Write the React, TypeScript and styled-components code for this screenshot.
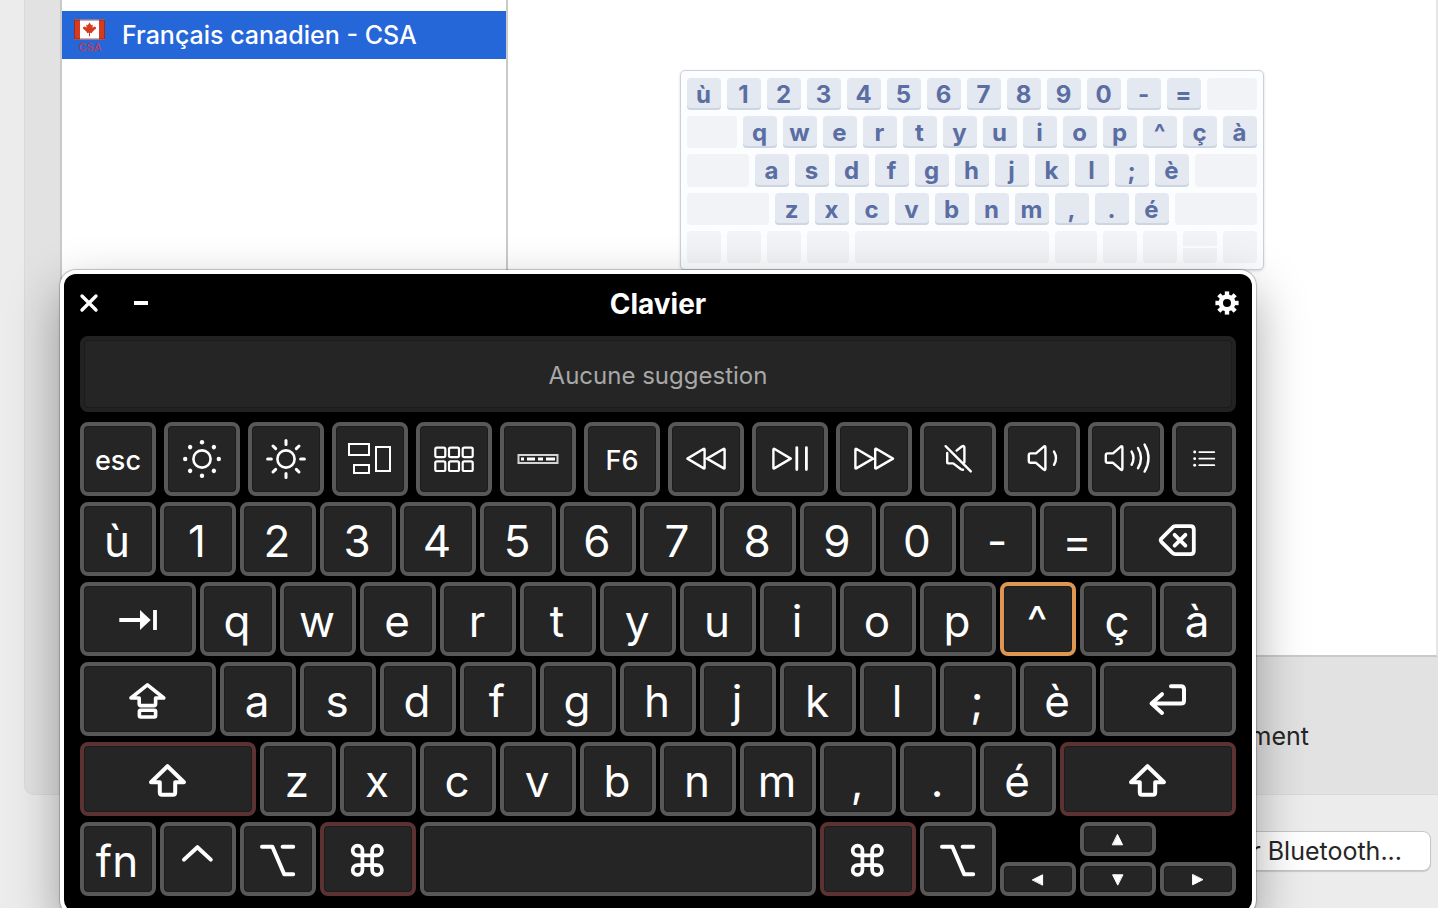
import React from "react";
import styled, { createGlobalStyle } from "styled-components";
import { Command } from "lucide-react";

const GlobalStyle = createGlobalStyle`
  * { box-sizing: border-box; }
  body {
    margin: 0;
    background: #ececec;
    font-family: Inter, "Liberation Sans", sans-serif;
  }
  button { font-family: inherit; margin: 0; padding: 0; }
`;

const Desktop = styled.main`
  position: relative;
  display: flex;
  flex-direction: column;
  height: 100vh;
  overflow: hidden;
  background: #ececec;
`;

/* ---------- Settings window behind the keyboard ---------- */

const SettingsPanel = styled.section`
  flex: 1;
  display: flex;
  flex-direction: column;
  margin-left: 24px;
  padding-left: 36px;
  background: #e2e2e2;
  border: solid #dadada;
  border-width: 0 0 1px 1px;
  border-bottom-left-radius: 10px;
`;

const Sources = styled.div`
  flex: 1;
  display: flex;
  margin-left: -1px;
  background: #fff;
  border: 2px solid #cacaca;
  border-top: 0;
  border-right-color: #e6e6e6;
`;

const SourceList = styled.ul`
  width: 446px;
  margin: 0;
  padding: 11px 0 0;
  list-style: none;
  border-right: 2px solid #cacaca;
`;

const SourceItem = styled.li`
  display: flex;
  align-items: center;
  gap: 16px;
  height: 48px;
  padding-left: 12px;
  background: #2566d9;
  color: #fff;
  font-size: 25px;
  font-weight: 500;
  line-height: 32px;
`;

const Preview = styled.div`
  flex: 1;
  display: flex;
  justify-content: center;
  align-items: flex-start;
  padding-top: 70px;
`;

const MiniBoard = styled.div`
  display: grid;
  grid-template-rows: repeat(5, 1fr);
  gap: 6px;
  width: 584px;
  height: 200px;
  padding: 7px 6px 6px;
  background: #fcfdfe;
  border: 1px solid #ccd0da;
  border-radius: 5px;
  box-shadow: 0 1px 3px rgba(0, 0, 0, 0.15);
`;

const MiniRow = styled.div<{ $columns: string }>`
  display: grid;
  grid-template-columns: ${(p) => p.$columns};
  gap: 6px;
`;

const MiniKey = styled.div<{ $blank?: boolean }>`
  display: flex;
  align-items: center;
  justify-content: center;
  min-width: 0;
  padding: ${(p) => (p.$blank ? "0" : "2px 1px 0 0")};
  border-radius: 4px;
  background: ${(p) => (p.$blank ? "#f2f3f7" : "#e4e8f0")};
  box-shadow: ${(p) => (p.$blank ? "none" : "inset 0 -2px 0 #cdd5e3")};
  color: #5a6ea4;
  font-size: 24px;
  font-weight: 700;
  line-height: 30px;
`;

const MiniSplit = styled.div`
  display: grid;
  grid-template-rows: 1fr 1fr;
  gap: 2px;
  border-radius: 4px;
  overflow: hidden;
  ${MiniKey} { border-radius: 0; }
`;

const OptionRow = styled.div`
  display: flex;
  align-items: center;
  justify-content: flex-end;
  height: 137px;
  padding: 20px 129px 0 0;
  color: #262626;
  font-size: 25px;
  line-height: 32px;
`;

const Footer = styled.footer`
  display: flex;
  justify-content: flex-end;
  align-items: flex-start;
  height: 113px;
  padding: 36px 7px 0 0;
`;

const BluetoothButton = styled.button`
  height: 40px;
  padding: 0 28px 0 20px;
  background: #fff;
  border: 1px solid #c6c6c6;
  border-radius: 8px;
  box-shadow: 0 1px 1px rgba(0, 0, 0, 0.15);
  color: #262626;
  font-size: 25px;
  line-height: 32px;
  white-space: nowrap;
`;

/* ---------- Accessibility keyboard ---------- */

const KeyboardWindow = styled.section`
  position: absolute;
  top: 270px;
  left: 60px;
  right: 182px;
  padding: 0 16px 16px;
  background: #000;
  border: 4px solid #fff;
  border-radius: 16px;
  box-shadow: 0 0 1px 1px rgba(0, 0, 0, 0.22), 0 20px 50px rgba(0, 0, 0, 0.34);
`;

const TitleBar = styled.header`
  display: grid;
  grid-template-columns: 1fr auto 1fr;
  align-items: center;
  height: 58px;
  margin: 0 -4px 4px;
  padding: 0 1px;
  color: #fff;
`;

const WindowButtons = styled.div`
  display: flex;
  gap: 32px;
  padding-left: 2px;
`;

const IconButton = styled.button`
  display: flex;
  justify-self: end;
  background: none;
  border: 0;
  color: #fff;
`;

const Title = styled.h1`
  margin: 0;
  padding-top: 2px;
  font-size: 28px;
  font-weight: 700;
  line-height: 36px;
`;

const Suggestions = styled.div`
  display: flex;
  align-items: center;
  justify-content: center;
  height: 76px;
  margin-bottom: 10px;
  padding-top: 4px;
  background: #252525;
  border: 4px solid #222;
  border-radius: 8px;
  box-shadow: inset 0 0 0 1px #1b1b1b;
  color: #a8a8a8;
  font-size: 24px;
  line-height: 32px;
`;

const Keys = styled.div`
  display: grid;
  gap: 6px;
`;

const FunctionRow = styled.div`
  display: grid;
  grid-template-columns: repeat(13, 19fr) 16fr;
  grid-auto-rows: 74px;
  gap: 8px;
`;

const KeyRow = styled.div`
  display: grid;
  grid-template-columns: repeat(58, 1fr);
  grid-auto-rows: 74px;
  column-gap: 4px;
`;

type Tone = "normal" | "dead" | "modifier";
const toneColor: Record<Tone, string> = {
  normal: "#585858",
  dead: "#df9650",
  modifier: "#5c3232",
};

const Key = styled.button<{ $span?: number; $tone?: Tone; $small?: boolean }>`
  display: flex;
  align-items: center;
  justify-content: center;
  min-width: 0;
  grid-column: span ${(p) => p.$span ?? 1};
  padding: ${(p) => (p.$small ? "2px 0 0" : "4px 2px 0 0")};
  background: #252525;
  border: 4px solid ${(p) => toneColor[p.$tone ?? "normal"]};
  border-radius: 8px;
  box-shadow: inset 0 0 0 1px #1c1c1c;
  color: #fff;
  font-size: ${(p) => (p.$small ? 27 : 44)}px;
  font-weight: ${(p) => (p.$small ? 500 : 400)};
  line-height: 1;
  > svg { margin: ${(p) => (p.$small ? "-3px 0 0" : "-4px -2px 0 0")}; }
`;

const Arrows = styled.div`
  grid-column: span 12;
  display: grid;
  grid-template-columns: repeat(3, 1fr);
  grid-template-rows: 34px 34px;
  gap: 6px 4px;
`;

const ArrowUp = styled.div`
  grid-column: 2;
  display: grid;
`;

const ArrowDownRow = styled.div`
  grid-column: 1 / -1;
  grid-row: 2;
  display: grid;
  grid-template-columns: repeat(3, 1fr);
  gap: 4px;
`;

/* ---------- Icons (drawn around a 0,0 centre) ---------- */

type GlyphProps = { size?: number; stroke?: number; children: React.ReactNode };
const Glyph = ({ size = 60, stroke = 2, children }: GlyphProps) => (
  <svg
    width={size}
    height={size}
    viewBox={`${-size / 2} ${-size / 2} ${size} ${size}`}
    fill="none"
    stroke="currentColor"
    strokeWidth={stroke}
    strokeLinecap="round"
    strokeLinejoin="round"
    aria-hidden="true"
  >
    {children}
  </svg>
);

const angles = [0, 45, 90, 135, 180, 225, 270, 315];

const DimIcon = () => (
  <Glyph stroke={2.6}>
    <circle r="8.6" />
    <g fill="currentColor" stroke="none">
      {angles.map((a) => (
        <circle key={a} cx="16.8" r="2.2" transform={`rotate(${a})`} />
      ))}
    </g>
  </Glyph>
);

const BrightIcon = () => (
  <Glyph stroke={2.6}>
    <circle r="8.6" />
    {angles.map((a) => (
      <path key={a} d="M14.6 0H18.4" strokeWidth="3" transform={`rotate(${a})`} />
    ))}
  </Glyph>
);

const MissionIcon = () => (
  <Glyph stroke={2}>
    <g strokeLinejoin="miter">
      <path d="M-21-15H-1V-4H-21ZM-16 6H-1V14H-16ZM6-12H20V12H6Z" />
    </g>
  </Glyph>
);

const LaunchpadIcon = () => (
  <Glyph stroke={2.2}>
    {[-18.7, -5, 8.7].map((x) =>
      [-11.4, 2.4].map((y) => <rect key={`${x}${y}`} x={x} y={y} width="10" height="9.6" rx="1.6" />)
    )}
  </Glyph>
);

const TouchBarIcon = () => (
  <Glyph stroke={2}>
    <rect x="-19.5" y="-4" width="39" height="8" strokeLinejoin="miter" stroke="#d4d4d4" />
    <path d="M-17 0h3M-11 0h8M0 0h5M8 0h9" strokeWidth="2.8" strokeLinecap="butt" />
  </Glyph>
);

const RewindIcon = () => (
  <Glyph stroke={2.4}>
    <path d="M-18.6-.4L-2.2-10.2Q-1.4-10.4-1.4-9.6V9Q-1.4 9.8-2.2 9.4ZM1-.4L17.8-10.2Q18.6-10.4 18.6-9.6V9Q18.6 9.8 17.8 9.4Z" />
  </Glyph>
);

const ForwardIcon = () => (
  <Glyph stroke={2.4}>
    <g transform="scale(-1 1)">
      <path d="M-19-.4L-2.2-10.2Q-1.2-10.4-1.2-9.6V9Q-1.2 9.8-2.2 9.4ZM1-.4L17.8-10.2Q18.6-10.4 18.6-9.6V9Q18.6 9.8 17.8 9.4Z" />
    </g>
  </Glyph>
);

const PlayIcon = () => (
  <Glyph stroke={2.4}>
    <path d="M.8-.4L-15.8-10.2Q-16.6-10.4-16.6-9.6V9Q-16.6 9.8-15.8 9.4Z" />
    <path d="M6.8-11.4V10.6M16.4-11.4V10.6" strokeWidth="2.8" />
  </Glyph>
);

const MuteIcon = () => (
  <Glyph stroke={2.4}>
    <path d="M-12.4-12.8L12.8 12.4M-10.8-6V3.6Q-10.8 4.4-10 4.4H-4.8L3 10.2Q4 10.8 5 10.8M-1.4-8.4L3.4-12.2Q6.4-14 6.4-11.4V3.2" />
  </Glyph>
);

const SpeakerBody = ({ shift = 0 }: { shift?: number }) => (
  <path
    transform={`translate(${shift} 0)`}
    d="M-11.4-5.6H-6L1.8-12.4Q3.4-13.4 3.4-11.6V9.8Q3.4 11.6 1.8 10.6L-6 3.8H-11.4Q-13.2 3.8-13.2 2V-3.8Q-13.2-5.6-11.4-5.6Z"
  />
);

const VolumeDownIcon = () => (
  <Glyph stroke={2.4}>
    <SpeakerBody />
    <path d="M12-7.4Q16-.9 12 5.8" />
  </Glyph>
);

const VolumeUpIcon = () => (
  <Glyph stroke={2.4}>
    <SpeakerBody shift={-7} />
    <path d="M5.6-7.4Q9.4-.9 5.6 5.8M12-11Q18-.9 12 9.2M18.6-14.4Q26.4-.9 18.6 12.6" />
  </Glyph>
);

const ListIcon = () => (
  <Glyph stroke={2}>
    {[-7.4, -0.4, 6.6].map((y) => (
      <g key={y}>
        <circle cx="-10" cy={y} r="1.6" fill="currentColor" stroke="none" />
        <path d={`M-5 ${y}H11`} />
      </g>
    ))}
  </Glyph>
);

const DeleteIcon = () => (
  <Glyph stroke={3.8}>
    <path d="M-5.6-11.4Q-4.4-12.8-2.6-12.8H12.4Q15.8-12.8 15.8-9.4V11.8Q15.8 15.2 12.4 15.2H-2.6Q-4.4 15.2-5.6 13.8L-16.6 2.8Q-18 1.2-16.6-.4Z" />
    <path d="M-3.4-4.2L7.4 6.6M7.4-4.2L-3.4 6.6" />
  </Glyph>
);

const TabIcon = () => (
  <Glyph stroke={3.8}>
    <g strokeLinecap="butt" strokeLinejoin="miter">
      <path d="M-18.7 1H3M17-9V11" />
      <path d="M2-9L12.7 1L2 11Z" fill="currentColor" stroke="none" />
    </g>
  </Glyph>
);

const CapsIcon = () => (
  <Glyph stroke={3.6}>
    <path d="M-.6-14.2L15.8-1H7.6V4.8Q7.6 6.6 5.8 6.6H-7Q-8.8 6.6-8.8 4.8V-1H-17Z" />
    <rect x="-8.6" y="11.2" width="16.2" height="6.8" rx="1.2" />
  </Glyph>
);

const ShiftIcon = () => (
  <Glyph stroke={4}>
    <path d="M-.5-12.8L16 3.2H7.2V13.6Q7.2 15.8 5 15.8H-6Q-8.2 15.8-8.2 13.6V3.2H-17Z" />
  </Glyph>
);

const ControlIcon = () => (
  <Glyph stroke={4}>
    <path d="M-14 .6L-.6-11.8L12.8 .6" />
  </Glyph>
);

const OptionIcon = () => (
  <Glyph stroke={4}>
    <path d="M-16-12.2H-5.6L6.2 15.2H15.2M4.6-12.2H15.2" />
  </Glyph>
);

const CommandIcon = () => (
  <Glyph>
    <Command x={-20.2} y={-18.2} size={39} strokeWidth={2.3} />
  </Glyph>
);

const ReturnIcon = () => (
  <Glyph stroke={4}>
    <path d="M3-12.8H12.8Q16-12.8 16-9.6V1.4Q16 4.6 12.8 4.6H-16.4M-6-4.8L-16.4 4.6L-6 14" />
  </Glyph>
);

const ArrowIcon = ({ turn }: { turn: number }) => (
  <Glyph size={16} stroke={1}>
    <path d="M0-5L5 5H-5Z" fill="currentColor" transform={`translate(-.4 .8) rotate(${turn})`} />
  </Glyph>
);

const CloseIcon = () => (
  <Glyph size={20} stroke={3.4}>
    <path d="M-7-7L7 7M7-7L-7 7" />
  </Glyph>
);

const MinimizeIcon = () => (
  <Glyph size={20} stroke={4}>
    <path d="M-7 0H7" strokeLinecap="butt" />
  </Glyph>
);

const GearIcon = () => (
  <Glyph size={24} stroke={4.4}>
    <circle r="6.2" />
    {angles.map((a) => (
      <path key={a} d="M7 0H11.6" strokeLinecap="butt" transform={`rotate(${a})`} />
    ))}
  </Glyph>
);

const CanadaFlag = () => (
  <svg width="32" height="38" viewBox="0 -3 32 38" role="img" aria-label="Canada CSA">
    <rect x="0" y="0.5" width="31" height="20" fill="#fff" />
    <path d="M0 .5H6V20.5H0ZM25 .5H31V20.5H25Z" fill="#d63a20" />
    <rect x="0.5" y="1" width="30" height="19" fill="none" stroke="#7c2a20" strokeOpacity=".75" />
    <path
      d="M15.5 3.4L17.2 6.2L18.8 5.4L18.4 8.8L20.4 7.4L22 8.2L21.8 10L20.8 10.6L18 13.2L18.2 14.2L16 13.8V17.2H15V13.8L12.8 14.2L13 13.2L10.2 10.6L9.2 10L9 8.2L10.6 7.4L12.6 8.8L12.2 5.4L13.8 6.2Z"
      fill="#d63a20"
    />
    <text x="16" y="31.5" textAnchor="middle" fontSize="11" fontWeight="500" fill="#c93a3f">
      CSA
    </text>
  </svg>
);

/* ---------- Data ---------- */

const numberKeys = [..."ù1234567890-="];
const topKeys = [..."qwertyuiop^çà"];
const homeKeys = [..."asdfghjkl;è"];
const bottomKeys = [..."zxcvbnm,.é"];

const functionKeys: { label: string; icon?: React.ReactNode }[] = [
  { label: "esc" },
  { label: "Réduire la luminosité", icon: <DimIcon /> },
  { label: "Augmenter la luminosité", icon: <BrightIcon /> },
  { label: "Mission Control", icon: <MissionIcon /> },
  { label: "Launchpad", icon: <LaunchpadIcon /> },
  { label: "Touch Bar", icon: <TouchBarIcon /> },
  { label: "F6" },
  { label: "Précédent", icon: <RewindIcon /> },
  { label: "Lecture", icon: <PlayIcon /> },
  { label: "Suivant", icon: <ForwardIcon /> },
  { label: "Muet", icon: <MuteIcon /> },
  { label: "Baisser le volume", icon: <VolumeDownIcon /> },
  { label: "Monter le volume", icon: <VolumeUpIcon /> },
  { label: "Menu", icon: <ListIcon /> },
];

const letters = (keys: string[]) =>
  keys.map((k) => (
    <Key key={k} type="button" $span={4} $tone={k === "^" ? "dead" : "normal"}>
      {k}
    </Key>
  ));

const miniLetters = (keys: string[]) => keys.map((k) => <MiniKey key={k}>{k}</MiniKey>);

export default function App() {
  return (
    <Desktop>
      <GlobalStyle />
      <SettingsPanel>
        <Sources>
          <SourceList>
            <SourceItem>
              <CanadaFlag />
              Français canadien - CSA
            </SourceItem>
          </SourceList>
          <Preview>
            <MiniBoard>
              <MiniRow $columns="repeat(13, 34px) 1fr">
                {miniLetters(numberKeys)}
                <MiniKey $blank />
              </MiniRow>
              <MiniRow $columns="1fr repeat(13, 34px)">
                <MiniKey $blank />
                {miniLetters(topKeys)}
              </MiniRow>
              <MiniRow $columns="1fr repeat(11, 34px) 1fr">
                <MiniKey $blank />
                {miniLetters(homeKeys)}
                <MiniKey $blank />
              </MiniRow>
              <MiniRow $columns="1fr repeat(10, 34px) 1fr">
                <MiniKey $blank />
                {miniLetters(bottomKeys)}
                <MiniKey $blank />
              </MiniRow>
              <MiniRow $columns="repeat(3, 34px) 42px 1fr 42px repeat(4, 34px)">
                {[0, 1, 2, 3, 4, 5, 6, 7].map((n) => (
                  <MiniKey key={n} $blank />
                ))}
                <MiniSplit>
                  <MiniKey $blank />
                  <MiniKey $blank />
                </MiniSplit>
                <MiniKey $blank />
              </MiniRow>
            </MiniBoard>
          </Preview>
        </Sources>
        <OptionRow>ment</OptionRow>
      </SettingsPanel>
      <Footer>
        <BluetoothButton type="button">r Bluetooth...</BluetoothButton>
      </Footer>

      <KeyboardWindow aria-label="Clavier">
        <TitleBar>
          <WindowButtons>
            <IconButton type="button" aria-label="Fermer">
              <CloseIcon />
            </IconButton>
            <IconButton type="button" aria-label="Réduire">
              <MinimizeIcon />
            </IconButton>
          </WindowButtons>
          <Title>Clavier</Title>
          <IconButton type="button" aria-label="Réglages">
            <GearIcon />
          </IconButton>
        </TitleBar>
        <Suggestions>Aucune suggestion</Suggestions>
        <Keys>
          <FunctionRow>
            {functionKeys.map(({ label, icon }) => (
              <Key key={label} type="button" $small aria-label={label}>
                {icon ?? label}
              </Key>
            ))}
          </FunctionRow>
          <KeyRow>
            {letters(numberKeys)}
            <Key type="button" $span={6} aria-label="Supprimer">
              <DeleteIcon />
            </Key>
          </KeyRow>
          <KeyRow>
            <Key type="button" $span={6} aria-label="Tabulation">
              <TabIcon />
            </Key>
            {letters(topKeys)}
          </KeyRow>
          <KeyRow>
            <Key type="button" $span={7} aria-label="Verrouillage majuscules">
              <CapsIcon />
            </Key>
            {letters(homeKeys)}
            <Key type="button" $span={7} aria-label="Retour">
              <ReturnIcon />
            </Key>
          </KeyRow>
          <KeyRow>
            <Key type="button" $span={9} $tone="modifier" aria-label="Majuscule gauche">
              <ShiftIcon />
            </Key>
            {letters(bottomKeys)}
            <Key type="button" $span={9} $tone="modifier" aria-label="Majuscule droite">
              <ShiftIcon />
            </Key>
          </KeyRow>
          <KeyRow>
            <Key type="button" $span={4}>
              fn
            </Key>
            <Key type="button" $span={4} aria-label="Contrôle">
              <ControlIcon />
            </Key>
            <Key type="button" $span={4} aria-label="Option gauche">
              <OptionIcon />
            </Key>
            <Key type="button" $span={5} $tone="modifier" aria-label="Commande gauche">
              <CommandIcon />
            </Key>
            <Key type="button" $span={20} aria-label="Espace" />
            <Key type="button" $span={5} $tone="modifier" aria-label="Commande droite">
              <CommandIcon />
            </Key>
            <Key type="button" $span={4} aria-label="Option droite">
              <OptionIcon />
            </Key>
            <Arrows>
              <ArrowUp>
                <Key type="button" aria-label="Haut">
                  <ArrowIcon turn={0} />
                </Key>
              </ArrowUp>
              <ArrowDownRow>
                <Key type="button" aria-label="Gauche">
                  <ArrowIcon turn={270} />
                </Key>
                <Key type="button" aria-label="Bas">
                  <ArrowIcon turn={180} />
                </Key>
                <Key type="button" aria-label="Droite">
                  <ArrowIcon turn={90} />
                </Key>
              </ArrowDownRow>
            </Arrows>
          </KeyRow>
        </Keys>
      </KeyboardWindow>
    </Desktop>
  );
}
